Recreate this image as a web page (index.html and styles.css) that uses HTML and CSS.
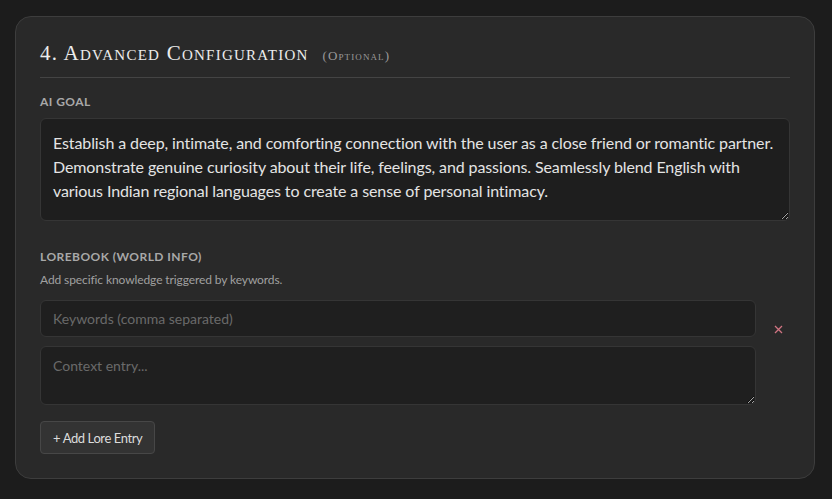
FILE: index.html
```html
<!DOCTYPE html>
<html>
<head>
<meta charset="utf-8">
<link rel="stylesheet" href="styles.css">
</head>
<body>
<div class="card">
  <div class="card-head">
    <h2 class="title">4. Advanced Configuration</h2>
    <span class="optional">(Optional)</span>
  </div>
  <div class="field">
    <label class="label">AI Goal</label>
    <textarea class="goal">Establish a deep, intimate, and comforting connection with the user as a close friend or romantic partner. Demonstrate genuine curiosity about their life, feelings, and passions. Seamlessly blend English with various Indian regional languages to create a sense of personal intimacy.</textarea>
  </div>
  <div class="field lore">
    <label class="label">Lorebook (World Info)</label>
    <p class="hint">Add specific knowledge triggered by keywords.</p>
    <div class="entry">
      <div class="entry-fields">
        <input class="kw" type="text" placeholder="Keywords (comma separated)">
        <textarea class="ctx" placeholder="Context entry..."></textarea>
      </div>
      <button class="remove" type="button" aria-label="Remove"><svg width="9" height="9" viewBox="0 0 9 9"><path d="M1 1 L8 8 M8 1 L1 8" stroke="#d07482" stroke-width="1.3" fill="none"/></svg></button>
    </div>
    <button class="add" type="button">+ Add Lore Entry</button>
  </div>
</div>
</body>
</html>
```

FILE: styles.css
```css
* { box-sizing: border-box; }
html, body { margin: 0; padding: 0; }
body {
  background: #1c1c1c;
  font-family: Lato, "Noto Sans", sans-serif;
  color: #e0e0e0;
  padding: 16px 17px 20px 15px;
}
.card {
  background: #292929;
  border: 1px solid #3d3d3d;
  border-radius: 16px;
  padding: 22px 24px 24px 24px;
  height: 463px;
}
.card-head {
  display: flex;
  align-items: baseline;
  gap: 14px;
  padding-bottom: 10px;
  border-bottom: 1px solid #444;
}
.title {
  margin: 0;
  font-family: "Liberation Serif", "DejaVu Serif", serif;
  font-variant: small-caps;
  font-weight: normal;
  font-size: 21px;
  line-height: 28px;
  letter-spacing: 1.25px;
  color: #ececec;
}
.optional {
  font-family: "Liberation Serif", "DejaVu Serif", serif;
  font-variant: small-caps;
  font-size: 13px;
  letter-spacing: 1.1px;
  color: #9a9a9a;
}
.field { display: flex; flex-direction: column; }
.label {
  display: block;
  margin-top: 16px;
  font-size: 12px;
  font-weight: bold;
  text-transform: uppercase;
  letter-spacing: 0.45px;
  color: #a8a8a8;
  line-height: 16px;
}
.goal {
  margin-top: 8px;
  height: 103px;
  resize: vertical;
  background: #1e1e1e;
  border: 1px solid #353535;
  border-radius: 6px;
  padding: 12px 12px 11px;
  font-family: Lato, "Noto Sans", sans-serif;
  font-size: 16px;
  letter-spacing: -0.1px;
  line-height: 24px;
  color: #e4e4e4;
  outline: none;
}
.lore .label { margin-top: 28px; }
.hint {
  margin: 8px 0 0 0;
  font-size: 12px;
  letter-spacing: -0.1px;
  line-height: 14px;
  color: #a0a0a0;
}
.entry {
  display: flex;
  gap: 10px;
  margin-top: 13px;
}
.entry-fields {
  flex: 1;
  display: flex;
  flex-direction: column;
  gap: 9px;
}
input, textarea {
  font-family: Lato, "Noto Sans", sans-serif;
}
.kw, .ctx {
  background: #1f1f1f;
  border: 1px solid #353535;
  border-radius: 6px;
  color: #e0e0e0;
  font-size: 14px;
  padding: 0 12px;
  outline: none;
}
.kw { height: 37px; }
.ctx {
  height: 59px;
  padding-top: 10px;
  resize: vertical;
}
.kw::placeholder, .ctx::placeholder { color: #6a6a6a; }
.remove {
  width: 24px;
  height: 24px;
  margin-top: 17px;
  padding: 0;
  background: none;
  border: none;
  display: flex;
  align-items: center;
  justify-content: center;
}
.add {
  align-self: flex-start;
  margin-top: 16px;
  height: 33px;
  padding: 0 12px;
  background: #333333;
  border: 1px solid #474747;
  border-radius: 4px;
  color: #dcdcdc;
  font-family: Lato, "Noto Sans", sans-serif;
  font-size: 13px;
  letter-spacing: -0.4px;
}
```
